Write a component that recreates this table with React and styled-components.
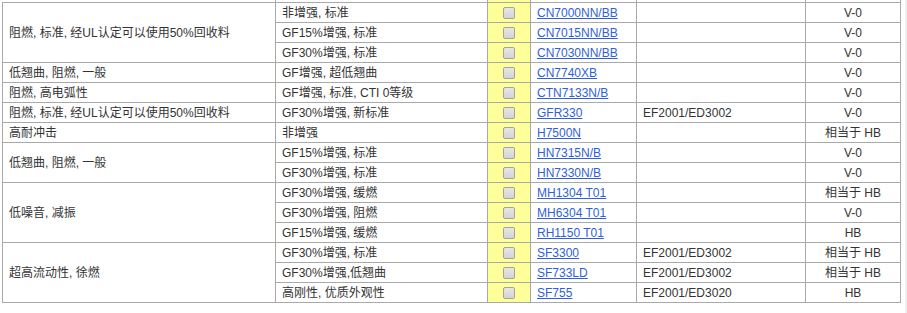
import styled, { createGlobalStyle } from 'styled-components'

const GlobalStyle = createGlobalStyle`
  html, body {
    margin: 0;
    padding: 0;
    background: #fff;
  }
  body {
    font-family: "Liberation Sans", "Noto Sans CJK SC", sans-serif;
    font-size: 12px;
    color: #333;
  }
`

const groups = [
  {
    use: '阻燃, 标准, 经UL认定可以使用50%回收料',
    items: [
      ['非增强, 标准', 'CN7000NN/BB', '', 'V-0'],
      ['GF15%增强, 标准', 'CN7015NN/BB', '', 'V-0'],
      ['GF30%增强, 标准', 'CN7030NN/BB', '', 'V-0'],
    ],
  },
  { use: '低翘曲, 阻燃, 一般', items: [['GF增强, 超低翘曲', 'CN7740XB', '', 'V-0']] },
  { use: '阻燃, 高电弧性', items: [['GF增强, 标准, CTI 0等级', 'CTN7133N/B', '', 'V-0']] },
  {
    use: '阻燃, 标准, 经UL认定可以使用50%回收料',
    items: [['GF30%增强, 新标准', 'GFR330', 'EF2001/ED3002', 'V-0']],
  },
  { use: '高耐冲击', items: [['非增强', 'H7500N', '', '相当于 HB']] },
  {
    use: '低翘曲, 阻燃, 一般',
    items: [
      ['GF15%增强, 标准', 'HN7315N/B', '', 'V-0'],
      ['GF30%增强, 标准', 'HN7330N/B', '', 'V-0'],
    ],
  },
  {
    use: '低噪音, 减振',
    items: [
      ['GF30%增强, 缓燃', 'MH1304 T01', '', '相当于 HB'],
      ['GF30%增强, 阻燃', 'MH6304 T01', '', 'V-0'],
      ['GF15%增强, 缓燃', 'RH1150 T01', '', 'HB'],
    ],
  },
  {
    use: '超高流动性, 徐燃',
    items: [
      ['GF30%增强, 标准', 'SF3300', 'EF2001/ED3002', '相当于 HB'],
      ['GF30%增强,低翘曲', 'SF733LD', 'EF2001/ED3002', '相当于 HB'],
      ['高刚性, 优质外观性', 'SF755', 'EF2001/ED3020', 'HB'],
    ],
  },
]

export default function App() {
  return (
    <>
      <GlobalStyle />
      <Page>
        <Main>
          <Grade>
            <colgroup>
              <col style={{ width: 273 }} />
              <col style={{ width: 212 }} />
              <col style={{ width: 43 }} />
              <col style={{ width: 106 }} />
              <col style={{ width: 169 }} />
              <col style={{ width: 95 }} />
            </colgroup>
            <tbody>
              <tr>
                <Cell $noLeft></Cell>
                <Cell></Cell>
                <CheckCell></CheckCell>
                <Cell></Cell>
                <Cell></Cell>
                <Cell></Cell>
              </tr>
              {groups.map((g, gi) =>
                g.items.map((it, i) => (
                  <tr key={gi + '-' + i}>
                    {i === 0 && <Cell rowSpan={g.items.length}>{g.use}</Cell>}
                    <Cell>{it[0]}</Cell>
                    <CheckCell>
                      <Check type="checkbox" />
                    </CheckCell>
                    <Cell>
                      <Link href="#">{it[1]}</Link>
                    </Cell>
                    <Cell>{it[2]}</Cell>
                    <Cell $center>{it[3]}</Cell>
                  </tr>
                ))
              )}
            </tbody>
          </Grade>
        </Main>
        <ScrollEdge />
      </Page>
    </>
  )
}

const Page = styled.div`
  display: flex;
  height: 313px;
  overflow: hidden;
`

const Main = styled.div`
  flex: 1;
  padding-left: 2px;
  overflow: hidden;
`

const ScrollEdge = styled.div`
  width: 2px;
  background: #f0f0f0;
`

const Grade = styled.table`
  border-collapse: collapse;
  table-layout: fixed;
  width: 899px;
  margin-top: -18px;
`

const Cell = styled.td`
  height: 19px;
  padding: 0 6px;
  line-height: 16px;
  border: 1px solid #a9a9a9;
  border-left-style: ${(p) => (p.$noLeft ? 'hidden' : 'solid')};
  text-align: ${(p) => (p.$center ? 'center' : 'left')};
  white-space: nowrap;
  overflow: hidden;
`

const CheckCell = styled.td`
  height: 19px;
  padding: 0;
  border: 1px solid #a9a9a9;
  background: #ffff99;
  text-align: center;
`

const Check = styled.input`
  appearance: none;
  display: block;
  margin: 0 auto;
  width: 12px;
  height: 12px;
  box-sizing: border-box;
  border: 1px solid #a3a3a3;
  border-radius: 2px;
  background: linear-gradient(#e6e6e6, #d4d4d4);
`

const Link = styled.a`
  color: #2f5fdc;
  text-decoration: underline;
`
